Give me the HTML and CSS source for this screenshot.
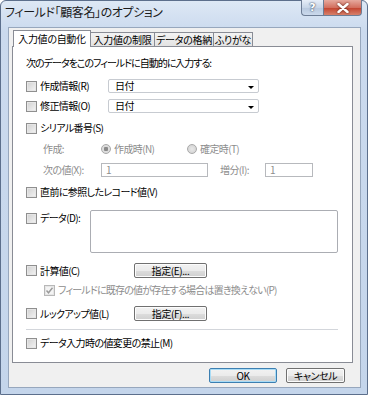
FILE: index.html
```html
<!DOCTYPE html>
<html lang="ja">
<head>
  <meta charset="UTF-8" />
  <title>フィールド「顧客名」のオプション</title>
  <link rel="stylesheet" href="styles.css">
</head>
<body>

  <div class="window">
    <div class="titlebar">
      <span class="title">フィールド「顧客名」のオプション</span>
      <div class="caption-buttons">
        <span class="cap-btn help">?</span>
        <span class="cap-btn close">
          <svg viewBox="0 0 12 10" width="12" height="10">
            <path d="M1.5 1 L10.5 9 M10.5 1 L1.5 9"></path>
          </svg>
        </span>
      </div>
    </div>

    <div class="client">
      <div class="tabs">
        <div class="tab active">入力値の自動化</div>
        <div class="tab">入力値の制限</div>
        <div class="tab">データの格納</div>
        <div class="tab">ふりがな</div>
      </div>

      <div class="panel">
        <div class="row heading">次のデータをこのフィールドに自動的に入力する:</div>

        <div class="row r-created">
          <label class="check wide"><span class="cb"></span>作成情報(R)</label>
          <div class="select"><span>日付</span><span class="arrow"></span></div>
        </div>

        <div class="row r-modified">
          <label class="check wide"><span class="cb"></span>修正情報(O)</label>
          <div class="select"><span>日付</span><span class="arrow"></span></div>
        </div>

        <div class="row r-serial">
          <label class="check"><span class="cb"></span>シリアル番号(S)</label>
        </div>

        <div class="row r-radios disabled indent">
          <span class="lbl-a">作成:</span>
          <label class="radio r1"><span class="rb on"></span>作成時(N)</label>
          <label class="radio"><span class="rb"></span>確定時(T)</label>
        </div>

        <div class="row r-next disabled indent">
          <span class="lbl-a">次の値(X):</span>
          <div class="textbox tb-next">1</div>
          <span class="lbl-b">増分(I):</span>
          <div class="textbox tb-step">1</div>
        </div>

        <div class="row r-prev">
          <label class="check"><span class="cb"></span>直前に参照したレコード値(V)</label>
        </div>

        <div class="row r-data">
          <label class="check data-lbl"><span class="cb"></span>データ(D):</label>
          <div class="textarea"></div>
        </div>

        <div class="row r-calc">
          <label class="check calc-lbl"><span class="cb"></span>計算値(C)</label>
          <button class="btn spec">指定(E)...</button>
        </div>

        <div class="row r-keep disabled">
          <label class="check"><span class="cb checked">
            <svg viewBox="0 0 9 9" width="9" height="9"><path d="M1.5 4.5 L3.5 6.8 L7.5 1.8"></path></svg>
          </span>フィールドに既存の値が存在する場合は置き換えない(P)</label>
        </div>

        <div class="row r-lookup">
          <label class="check calc-lbl"><span class="cb"></span>ルックアップ値(L)</label>
          <button class="btn spec">指定(F)...</button>
        </div>

        <div class="separator"></div>

        <div class="row r-lock">
          <label class="check"><span class="cb"></span>データ入力時の値変更の禁止(M)</label>
        </div>
      </div>

      <div class="footer">
        <button class="btn ok">OK</button>
        <button class="btn cancel">キャンセル</button>
      </div>
    </div>
  </div>

</body>
</html>
```

FILE: styles.css
```css
body {
  margin: 0;
  font-family: "Noto Sans CJK JP", "Noto Sans", sans-serif;
  font-feature-settings: "palt";
  background-color: #fff;
}

.window {
  width: 368px;
  height: 395px;
  box-sizing: border-box;
  border: 1px solid #5c6f8c;
  border-radius: 6px 6px 0 0;
  background: linear-gradient(to bottom, #dde8f5 0px, #cbdaee 30px, #c4d5eb 100%);
  display: flex;
  flex-direction: column;
}

/* title bar */
.titlebar {
  height: 26px;
  display: flex;
  justify-content: space-between;
  align-items: flex-start;
}

.title {
  margin: 3px 0 0 4px;
  font-size: 12px;
  line-height: 16px;
  letter-spacing: -0.4px;
  color: #1a1a1a;
}

.caption-buttons {
  display: flex;
  margin-right: 5px;
  margin-top: -1px;
}

.cap-btn {
  height: 16px;
  display: flex;
  align-items: center;
  justify-content: center;
  border: 1px solid #6d7d95;
  border-top: none;
  box-sizing: border-box;
}

.help {
  width: 22px;
  border-right: none;
  border-radius: 0 0 0 4px;
  background: linear-gradient(to bottom, #e7eef8, #c8d6e8 50%, #b7c8de 51%, #cbd9ec);
  color: #fff;
  font-family: "DejaVu Sans", sans-serif;
  font-weight: bold;
  font-size: 11px;
  text-shadow: 0 0 2px #3b4c66, 0 0 1px #3b4c66;
}

.close {
  width: 39px;
  border-radius: 0 0 4px 0;
  background: linear-gradient(to bottom, #e6a99e, #d3705f 50%, #c2412d 51%, #d7806a);
}

.close svg {
  stroke: #fff;
  stroke-width: 2.4;
  stroke-linecap: round;
  fill: none;
  filter: drop-shadow(0 0 1px #5a1c12);
}

/* client area */
.client {
  height: 361px;
  margin: 0 6px 0 7px;
  box-sizing: border-box;
  border: 1px solid #97a7bd;
  background-color: #f0f0f0;
  display: flex;
  flex-direction: column;
  padding: 0 7px 0 3px;
}

.tabs {
  display: flex;
  height: 17px;
  align-items: flex-end;
  padding-left: 1px;
  margin-top: 1px;
}

.tab {
  flex: none;
  box-sizing: border-box;
  height: 14px;
  font-size: 10px;
  line-height: 13px;
  letter-spacing: -0.3px;
  text-align: center;
  white-space: nowrap;
  border: 1px solid #898c95;
  border-bottom: none;
  border-left: none;
  background: linear-gradient(to bottom, #f3f3f3, #e3e3e3);
  color: #000;
}

.tab.active {
  height: 17px;
  line-height: 16px;
  border-left: 1px solid #898c95;
  background: #fff;
  margin-bottom: -1px;
  position: relative;
  z-index: 1;
  width: 78px;
}

.tab:nth-child(2) { width: 64px; }
.tab:nth-child(3) { width: 59px; }
.tab:nth-child(4) { width: 39px; }

.panel {
  height: 317px;
  box-sizing: border-box;
  border: 1px solid #898c95;
  background-color: #fff;
  padding: 9px 0 0 13px;
  font-size: 10px;
  letter-spacing: -0.6px;
  color: #000;
}

.row {
  display: flex;
  align-items: center;
  height: 14px;
  line-height: 14px;
  white-space: nowrap;
}

.heading { letter-spacing: -1px; }
.r-created { margin-top: 9px; }
.r-modified { margin-top: 6px; }
.r-serial { margin-top: 8px; }
.r-radios { margin-top: 7px; }
.r-next { margin-top: 7px; }
.r-prev { margin-top: 8px; }
.r-data { margin-top: 11px; height: 43px; align-items: flex-start; }
.r-calc { margin-top: 10px; height: 15px; }
.r-keep { margin-top: 5px; padding-left: 18px; letter-spacing: -0.8px; }
.r-lookup { margin-top: 9px; height: 15px; }
.r-lock { margin-top: 6px; }

.disabled { color: #8d8d8d; }
.indent { padding-left: 17px; }

/* checkbox */
.check {
  display: flex;
  align-items: center;
}

.check.wide { width: 82px; }
.data-lbl { width: 64px; margin-top: 1px; }
.calc-lbl { width: 108px; }

.cb {
  width: 9px;
  height: 9px;
  margin-right: 3px;
  border: 1px solid #8f8f8f;
  background: linear-gradient(135deg, #d0d0d0, #f4f4f4);
  box-shadow: inset 0 0 0 1px #e6e6e6;
  display: flex;
  align-items: center;
  justify-content: center;
}

.cb.checked {
  border-color: #b8b8b8;
  background: #f4f4f4;
}

.cb svg {
  fill: none;
  stroke: #9a9a9a;
  stroke-width: 1.4;
}

/* radio */
.lbl-a { width: 58px; }

.radio {
  display: flex;
  align-items: center;
}

.radio.r1 { width: 86px; }

.rb {
  width: 8px;
  height: 8px;
  margin-right: 3px;
  border: 1px solid #a9a9a9;
  border-radius: 50%;
  background: radial-gradient(circle, #e8e8e8, #cfcfcf);
}

.rb.on {
  background: radial-gradient(circle, #8a8a8a 0 2px, #dcdcdc 2.5px);
}

/* inputs */
.select {
  width: 151px;
  height: 14px;
  box-sizing: border-box;
  border: 1px solid #c7cbd1;
  border-radius: 2px;
  background: #fff;
  display: flex;
  align-items: center;
  justify-content: space-between;
  padding: 0 4px 0 6px;
}

.arrow {
  width: 0;
  height: 0;
  border-left: 3px solid transparent;
  border-right: 3px solid transparent;
  border-top: 3px solid #000;
  margin-top: 2px;
}

.textbox {
  height: 14px;
  box-sizing: border-box;
  border: 1px solid #b7b9bd;
  background: #fff;
  padding-left: 4px;
  line-height: 12px;
  color: #8d8d8d;
}

.tb-next { width: 107px; }
.lbl-b { margin-left: 12px; width: 45px; }
.tb-step { width: 48px; }

.textarea {
  width: 248px;
  height: 43px;
  box-sizing: border-box;
  border: 1px solid #abadb3;
  border-radius: 2px;
  background: #fff;
}

/* buttons */
.btn {
  font-family: inherit;
  font-feature-settings: "palt";
  font-size: 10px;
  letter-spacing: -0.4px;
  color: #000;
  height: 15px;
  line-height: 12px;
  padding: 0;
  border: 1px solid #707070;
  border-radius: 2px;
  background: linear-gradient(to bottom, #f2f2f2 0, #ebebeb 50%, #dddddd 51%, #cfcfcf 100%);
  box-shadow: inset 0 0 0 1px #fcfcfc;
}

.spec { width: 73px; }

.separator {
  margin: 8px 0 0 0;
  width: 312px;
  height: 1px;
  background-color: #d3d6db;
}

.footer {
  display: flex;
  justify-content: flex-end;
  gap: 9px;
  padding: 5px 8px 0 0;
}

.ok {
  width: 68px;
  border-color: #3c7fb1;
  box-shadow: inset 0 0 0 1px #a9dcf6;
}

.cancel { width: 59px; }
```
